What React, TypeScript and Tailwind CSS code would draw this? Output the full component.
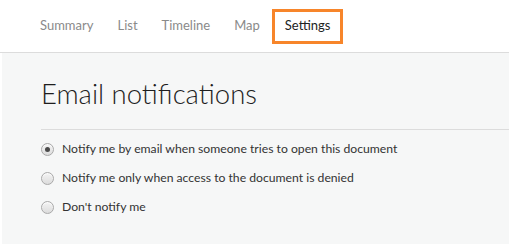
import { useState } from "react";

const tabs = ["Summary", "List", "Timeline", "Map", "Settings"];

const options = [
    "Notify me by email when someone tries to open this document",
    "Notify me only when access to the document is denied",
    "Don't notify me",
];

const Radio = ({ checked }: { checked: boolean }) => (
    <span className="flex h-[13px] w-[13px] shrink-0 items-center justify-center rounded-full border border-[#a9a9a9] bg-gradient-to-b from-[#f4f4f4] to-[#dcdcdc] shadow-[inset_0_1px_1px_rgba(255,255,255,0.8)]">
        {checked && <span className="h-[5px] w-[5px] rounded-full bg-[#4a4a4a]" />}
    </span>
);

const App = () => {
    const [active] = useState("Settings");
    const [selected, setSelected] = useState(0);

    return (
        <div className="h-[247px] w-full bg-white font-['Lato',sans-serif]">
            <div className="flex h-[53px] items-center border-b border-[#dcdcdc] pl-[28px]">
                {tabs.map((tab) =>
                    tab === active ? (
                        <span key={tab} className="flex h-[35px] items-center border-[3px] border-[#f7852a] px-[10px] text-[13px] text-[#222]">
                            {tab}
                        </span>
                    ) : (
                        <span key={tab} className="px-3 text-[13px] text-[#8a8a8a]">
                            {tab}
                        </span>
                    )
                )}
            </div>
            <div className="ml-[2px] h-[191px] bg-[#f6f7f7] pl-[39px]">
                <h1 className="pt-[21px] text-[27.5px] leading-[40px] font-light text-[#1e1e1e]">Email notifications</h1>
                <div className="mt-[15px] border-t border-[#dcdcdc]" />
                <div className="mt-[5px] flex flex-col">
                    {options.map((opt, i) => (
                        <label key={opt} onClick={() => setSelected(i)} className="flex h-[29px] cursor-pointer items-center gap-[8px] text-[12.2px] text-[#333]">
                            <Radio checked={selected === i} />
                            <span>{opt}</span>
                        </label>
                    ))}
                </div>
            </div>
        </div>
    );
};

export default App;
